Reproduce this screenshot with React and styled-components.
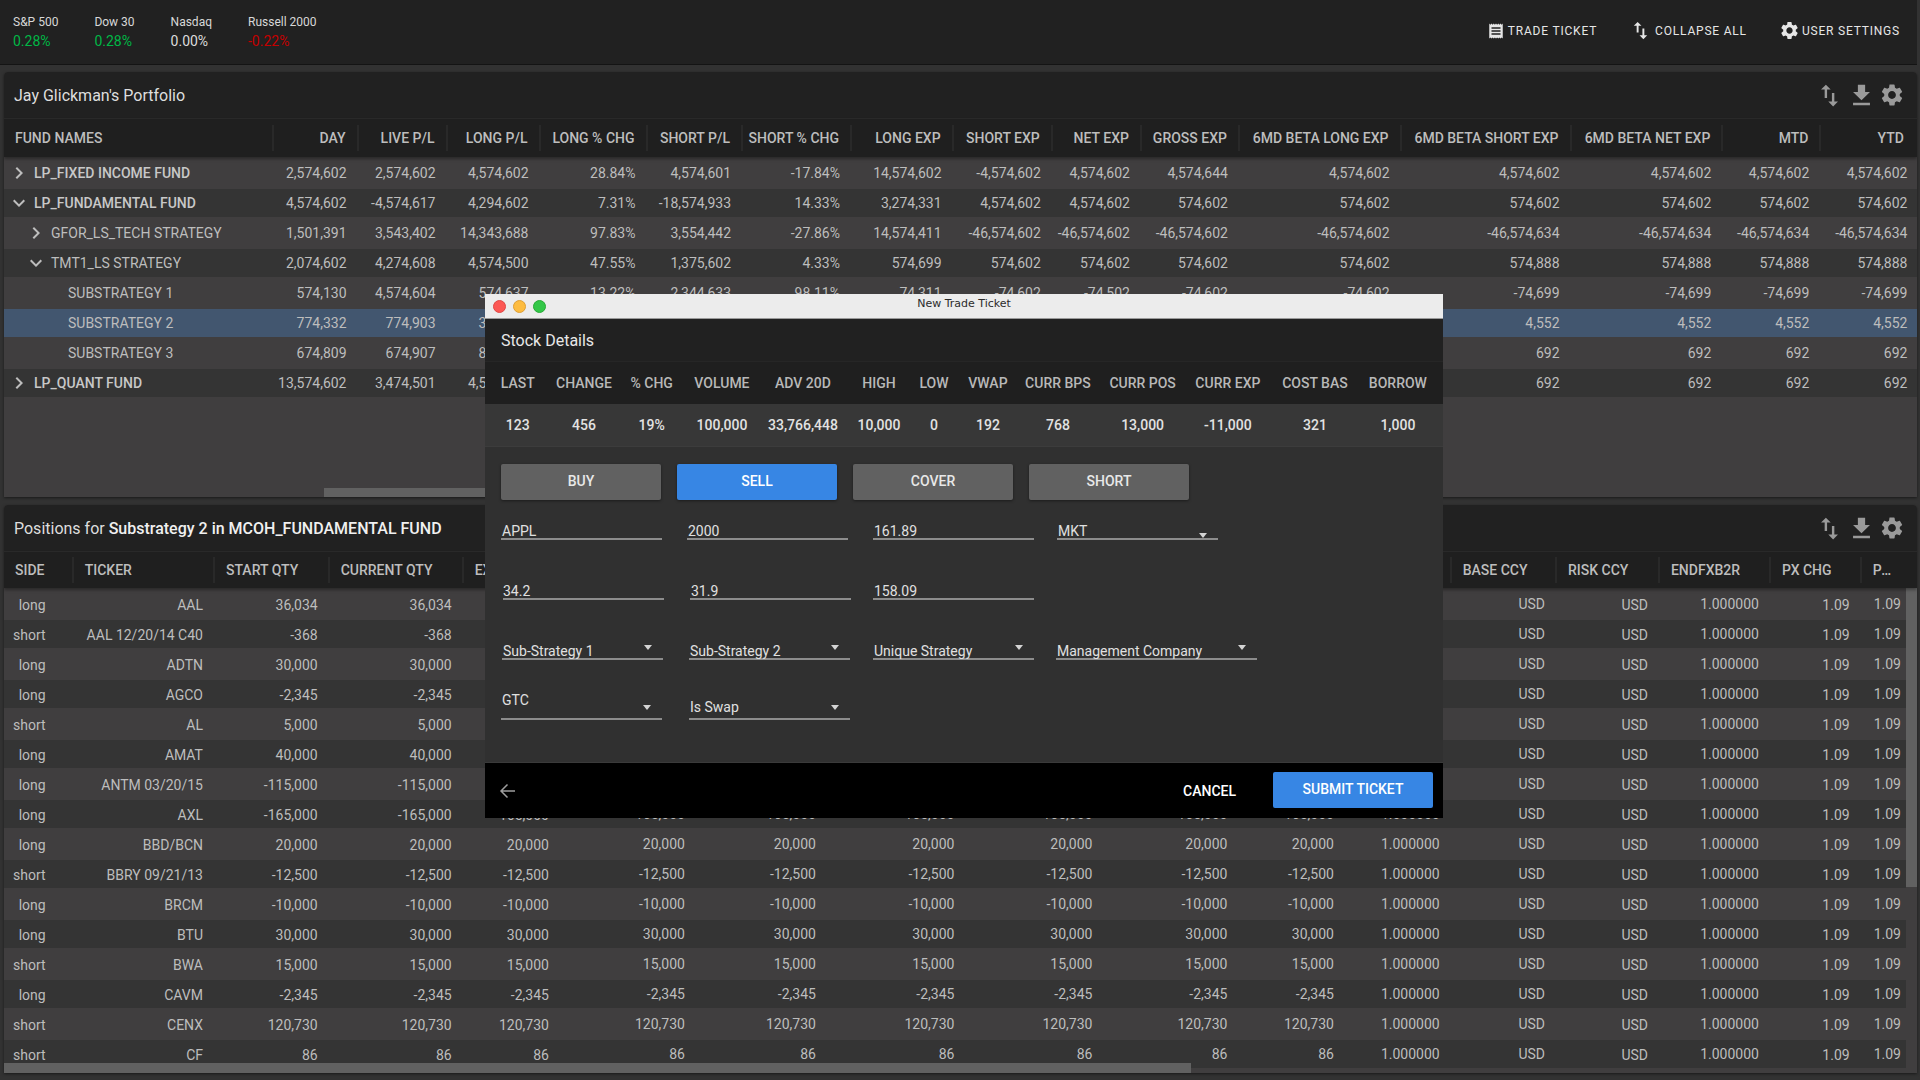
import React from 'react';
import styled, { createGlobalStyle } from 'styled-components';
import { MdReceipt, MdImportExport, MdSettings, MdFileDownload, MdKeyboardArrowRight, MdKeyboardArrowDown } from 'react-icons/md';

const Global = createGlobalStyle`
  html, body { margin: 0; padding: 0; background: #323232; overflow: hidden; }
  * { box-sizing: border-box; }
  body { font-family: Roboto, "Liberation Sans", sans-serif; font-size: 14px; }
`;

const Page = styled.div`
  position: relative;
  width: 1920px;
  height: 1080px;
  overflow: hidden;
  background: #323232;
`;
const TopBar = styled.header`
  width: 1917px;
  height: 65px;
  background: #212121;
  border-bottom: 1px solid #141414;
  display: flex;
  align-items: center;
  justify-content: space-between;
  padding: 0 17px 0 13px;
`;
const Indices = styled.div`
  display: flex;
  gap: 36px;
  margin-top: -1px;
`;
const Index = styled.div`
  display: flex;
  flex-direction: column;
  gap: 1px;
`;
const IndexName = styled.span`
  font-size: 12px;
  line-height: 17px;
  color: #d8d8d8;
`;
const IndexValue = styled.span`
  font-size: 14px;
  line-height: 18px;
  color: ${p => p.$tone === 'up' ? '#00b746' : p.$tone === 'down' ? '#c40000' : '#dcdcdc'};
`;
const Actions = styled.div`
  display: flex;
  align-items: center;
  gap: 32px;
  margin-top: -3px;
`;
const Action = styled.div`
  display: flex;
  align-items: center;
  gap: ${p => p.$gap || 3}px;
  color: #e6e6e6;
  font-size: 12px;
  letter-spacing: 0.8px;
  text-transform: uppercase;
  white-space: nowrap;
`;
const Stack = styled.div`
  display: flex;
  flex-direction: column;
  gap: 8px;
  margin: 7px 3px 0 4px;
`;
const Panel = styled.section`
  height: ${p => p.$h}px;
  display: flex;
  flex-direction: column;
  border-radius: 4px 4px 0 0;
  overflow: hidden;
  background: #403e3f;
  box-shadow: 0 1px 3px rgba(0,0,0,.5);
`;
const PanelHead = styled.div`
  flex: 0 0 47px;
  display: flex;
  align-items: center;
  justify-content: space-between;
  background: #212121;
  padding: 0 12px 0 10px;
  border-bottom: 1px solid #2a2a2a;
  font-size: 16px;
  color: #dedede;
`;
const Strong = styled.b`
  font-weight: 500;
  color: #f0f0f0;
`;
const Tools = styled.div`
  display: flex;
  align-items: center;
  color: #9a9a9a;
  gap: 0;
`;
const Head = styled.div`
  flex: 0 0 ${p => p.$h}px;
  display: grid;
  grid-template-columns: ${p => p.$cols};
  align-items: center;
  background: #1f1f1f;
  position: relative;
  box-shadow: 0 2px 3px rgba(0,0,0,.35);
  z-index: 1;
`;
const HeadCell = styled.div`
  height: 26px;
  line-height: 26px;
  font-weight: 500;
  font-size: 14px;
  color: #bdbdbd;
  white-space: nowrap;
  overflow: hidden;
  text-overflow: ellipsis;
  text-align: ${p => p.$left ? 'left' : 'right'};
  padding: ${p => p.$left ? '0 4px 0 11px' : '0 11px 0 0'};
  border-right: 2px solid ${p => p.$last ? 'transparent' : '#292929'};
`;
const Body = styled.div`
  flex: 1;
  position: relative;
  overflow: hidden;
  min-height: 0;
  background: #403e3f;
`;
const Row = styled.div`
  display: grid;
  grid-template-columns: ${p => p.$cols};
  align-items: center;
  height: ${p => p.$odd ? 32 : 28}px;
  background: ${p => p.$selected ? '#42566f' : p.$odd ? '#403e3f' : '#343434'};
  color: #bdbdbd;
  font-size: 14px;
  margin-right: ${p => p.$gutter || 0}px;
`;
const NameCell = styled.div`
  display: flex;
  align-items: center;
  padding-left: ${p => p.$pad}px;
  font-weight: ${p => p.$bold ? 500 : 400};
  color: ${p => p.$bold ? '#c8c8c8' : '#bdbdbd'};
  white-space: nowrap;
`;
const Cell = styled.div`
  text-align: right;
  white-space: nowrap;
  padding-right: ${p => p.$pad ?? 12}px;
  padding-top: ${p => p.$drop ? 2 : 0}px;
`;
const ChevronSlot = styled.span`
  display: inline-flex;
  width: 24px;
  margin-right: ${p => p.$gap}px;
  justify-content: center;
  color: #bdbdbd;
`;
const HScroll = styled.div`
  position: absolute;
  left: ${p => p.$left}px;
  bottom: 0;
  width: ${p => p.$w}px;
  height: ${p => p.$h}px;
  background: #616161;
`;
const VScroll = styled.div`
  position: absolute;
  right: 0;
  top: 0;
  width: 11px;
  height: 299px;
  background: #616161;
`;

const Modal = styled.div`
  position: absolute;
  left: 485px;
  top: 294px;
  width: 958px;
  height: 510px;
  display: flex;
  flex-direction: column;
  z-index: 5;
`;
const TitleBar = styled.div`
  flex: 0 0 25px;
  position: relative;
  display: flex;
  align-items: center;
  justify-content: center;
  background: #ececec;
  border-bottom: 1px solid #9a9a9a;
  color: #2b2b2b;
  font-family: "DejaVu Sans", sans-serif;
  font-size: 11px;
  padding-bottom: 5px;
`;
const Lights = styled.div`
  position: absolute;
  left: 8px;
  top: 6px;
  display: flex;
  gap: 7px;
`;
const Light = styled.span`
  width: 13px;
  height: 13px;
  border-radius: 50%;
  background: ${p => p.$c};
  border: 1px solid ${p => p.$b};
`;
const ModalHead = styled.div`
  flex: 0 0 43px;
  display: flex;
  align-items: center;
  padding-left: 16px;
  background: #212121;
  border-bottom: 1px solid #262626;
  font-size: 16px;
  color: #e8e8e8;
`;
const StatsRow = styled.div`
  flex: 0 0 ${p => p.$h}px;
  display: grid;
  grid-template-columns: 65.4px 67.2px 68.2px 72.4px 89.6px 62.4px 47.6px 60.4px 79.6px 89.8px 80.8px 93.2px 72.8px;
  align-items: center;
  background: ${p => p.$head ? '#1f1f1f' : '#373737'};
  border-bottom: ${p => p.$head ? 'none' : '1px solid #3c3c3c'};
  color: ${p => p.$head ? '#b8b8b8' : '#e2e2e2'};
  font-weight: 500;
  font-size: 14px;
`;
const StatCell = styled.div`
  text-align: center;
  white-space: nowrap;
`;
const Form = styled.div`
  flex: 1;
  background: #303030;
  padding: 17px 0 0 16px;
  display: flex;
  flex-direction: column;
`;
const Sides = styled.div`
  display: flex;
  gap: 16px;
  margin-bottom: 22px;
`;
const SideButton = styled.div`
  width: 160px;
  height: 36px;
  line-height: 35px;
  text-align: center;
  font-weight: 500;
  font-size: 14px;
  border-radius: 2px;
  color: ${p => p.$on ? '#fff' : '#e8e8e8'};
  background: ${p => p.$on ? '#3786e4' : '#616161'};
  box-shadow: 0 1px 3px rgba(0,0,0,.45);
`;
const FieldRow = styled.div`
  display: flex;
  height: ${p => p.$h}px;
`;
const Field = styled.div`
  width: ${p => p.$w || 161}px;
  height: ${p => p.$h || 38}px;
  margin-left: ${p => p.$ml || 0}px;
  margin-top: ${p => p.$mt || 0}px;
  padding: 0 0 0 ${p => p.$pl ?? 1}px;
  border-bottom: 2px solid #8c8c8c;
  position: relative;
  display: flex;
  align-items: flex-start;
  color: #e0e0e0;
  font-size: 14px;
  line-height: 20px;
  white-space: nowrap;
`;
const FieldText = styled.span`
  margin-top: ${p => p.$top ?? 2}px;
`;
const Caret = styled.span`
  position: absolute;
  right: ${p => p.$right ?? 10}px;
  bottom: ${p => p.$bottom ?? 10}px;
  width: 0;
  height: 0;
  border-left: 4.5px solid transparent;
  border-right: 4.5px solid transparent;
  border-top: 5px solid #d4d4d4;
`;
const Footer = styled.div`
  flex: 0 0 56px;
  background: #000;
  border-top: 1px solid #3a3a3a;
  display: flex;
  align-items: center;
  padding: 0 10px 0 14px;
`;
const Back = styled.svg`
  width: 17px;
  height: 16px;
  color: #9e9e9e;
  margin-right: auto;
`;
const Cancel = styled.span`
  font-weight: 500;
  font-size: 14px;
  color: #fff;
  margin-right: 37px;
`;
const Submit = styled.div`
  width: 160px;
  height: 36px;
  margin-top: -1px;
  line-height: 34px;
  text-align: center;
  font-weight: 500;
  font-size: 14px;
  color: #fff;
  background: #3786e4;
  border-radius: 2px;
`;

const topCols = [270, 84.5, 89, 93, 107, 95.5, 109, 101.6, 99.2, 89.2, 98, 161.6, 170, 151.8, 98, 95.6];
const topTpl = topCols.map(c => c + 'px').join(' ');
const topHead = ['FUND NAMES', 'DAY', 'LIVE P/L', 'LONG P/L', 'LONG % CHG', 'SHORT P/L', 'SHORT % CHG', 'LONG EXP', 'SHORT EXP', 'NET EXP', 'GROSS EXP', '6MD BETA LONG EXP', '6MD BETA SHORT EXP', '6MD BETA NET EXP', 'MTD', 'YTD'];
const fours = v => [v, v, v, v];
const topRows = [
  { name: 'LP_FIXED INCOME FUND', lvl: 0, icon: 'r', v: ['2,574,602', '2,574,602', '4,574,602', '28.84%', '4,574,601', '-17.84%', '14,574,602', '-4,574,602', '4,574,602', '4,574,644', '4,574,602', ...fours('4,574,602')] },
  { name: 'LP_FUNDAMENTAL FUND', lvl: 0, icon: 'd', v: ['4,574,602', '-4,574,617', '4,294,602', '7.31%', '-18,574,933', '14.33%', '3,274,331', '4,574,602', '4,574,602', '574,602', '574,602', ...fours('574,602')] },
  { name: 'GFOR_LS_TECH STRATEGY', lvl: 1, icon: 'r', v: ['1,501,391', '3,543,402', '14,343,688', '97.83%', '3,554,442', '-27.86%', '14,574,411', '-46,574,602', '-46,574,602', '-46,574,602', '-46,574,602', ...fours('-46,574,634')] },
  { name: 'TMT1_LS STRATEGY', lvl: 1, icon: 'd', v: ['2,074,602', '4,274,608', '4,574,500', '47.55%', '1,375,602', '4.33%', '574,699', '574,602', '574,602', '574,602', '574,602', ...fours('574,888')] },
  { name: 'SUBSTRATEGY 1', lvl: 2, v: ['574,130', '4,574,604', '574,637', '13.22%', '2,344,633', '98.11%', '74,311', '-74,602', '-74,502', '-74,602', '-74,602', ...fours('-74,699')] },
  { name: 'SUBSTRATEGY 2', lvl: 2, sel: true, v: ['774,332', '774,903', '374,500', '6.22%', '344,633', '8.11%', '4,311', '-4,602', '-4,502', '-4,602', '-4,602', ...fours('4,552')] },
  { name: 'SUBSTRATEGY 3', lvl: 2, v: ['674,809', '674,907', '874,500', '5.22%', '244,633', '7.11%', '3,311', '692', '692', '692', '692', ...fours('692')] },
  { name: 'LP_QUANT FUND', lvl: 0, icon: 'r', v: ['13,574,602', '3,474,501', '4,574,500', '7.22%', '244,633', '7.11%', '3,311', '692', '692', '692', '692', ...fours('692')] },
];

const botCols = [69.7, 141.3, 114.7, 134, 97.3, 136, 131, 138.5, 138, 135, 106.5, 105.7, 105.3, 103, 111, 90.7, 44.3];
const botTpl = botCols.map(c => c + 'px').join(' ');
const botHead = ['SIDE', 'TICKER', 'START QTY', 'CURRENT QTY', 'EXP QTY', 'LONG QTY', 'SHORT QTY', 'NET QTY', 'GROSS QTY', 'DELTA QTY', 'BETA QTY', 'FX RATE', 'BASE CCY', 'RISK CCY', 'ENDFXB2R', 'PX CHG', 'PX LAST'];
const botRows = [
  ['long', 'AAL', '36,034'], ['short', 'AAL 12/20/14 C40', '-368'], ['long', 'ADTN', '30,000'], ['long', 'AGCO', '-2,345'],
  ['short', 'AL', '5,000'], ['long', 'AMAT', '40,000'], ['long', 'ANTM 03/20/15', '-115,000'], ['long', 'AXL', '-165,000'],
  ['long', 'BBD/BCN', '20,000'], ['short', 'BBRY 09/21/13', '-12,500'], ['long', 'BRCM', '-10,000'], ['long', 'BTU', '30,000'],
  ['short', 'BWA', '15,000'], ['long', 'CAVM', '-2,345'], ['short', 'CENX', '120,730'], ['short', 'CF', '86'],
];
const dropFromLeft = 5;

const stats = [['LAST', '123'], ['CHANGE', '456'], ['% CHG', '19%'], ['VOLUME', '100,000'], ['ADV 20D', '33,766,448'], ['HIGH', '10,000'], ['LOW', '0'], ['VWAP', '192'], ['CURR BPS', '768'], ['CURR POS', '13,000'], ['CURR EXP', '-11,000'], ['COST BAS', '321'], ['BORROW', '1,000']];

function PanelTools() {
  return (
    <Tools>
      <MdImportExport size={29} />
      <MdFileDownload size={29} style={{ marginLeft: 3 }} />
      <MdSettings size={26} style={{ marginLeft: 3 }} />
    </Tools>
  );
}

const pads = [7, 24, 68];
function NameContent({ row }) {
  const Icon = row.icon === 'r' ? MdKeyboardArrowRight : MdKeyboardArrowDown;
  return (
    <NameCell $pad={row.icon ? pads[row.lvl] - 4 : 64} $bold={row.lvl === 0}>
      {row.icon && <ChevronSlot $gap={row.lvl === 0 ? 3 : 3}><Icon size={24} /></ChevronSlot>}
      {row.name}
    </NameCell>
  );
}

export default function App() {
  return (
    <Page>
      <Global />
      <TopBar>
        <Indices>
          <Index><IndexName>S&amp;P 500</IndexName><IndexValue $tone="up">0.28%</IndexValue></Index>
          <Index><IndexName>Dow 30</IndexName><IndexValue $tone="up">0.28%</IndexValue></Index>
          <Index><IndexName>Nasdaq</IndexName><IndexValue>0.00%</IndexValue></Index>
          <Index><IndexName>Russell 2000</IndexName><IndexValue $tone="down">-0.22%</IndexValue></Index>
        </Indices>
        <Actions>
          <Action><MdReceipt size={18} />Trade Ticket</Action>
          <Action><MdImportExport size={23} />Collapse All</Action>
          <Action $gap={2}><MdSettings size={21} />User Settings</Action>
        </Actions>
      </TopBar>
      <Stack>
        <Panel $h={425}>
          <PanelHead><span>Jay Glickman's Portfolio</span><PanelTools /></PanelHead>
          <Head $h={38} $cols={topTpl}>
            {topHead.map((h, i) => <HeadCell key={h} $left={i === 0} $last={i === topHead.length - 1}>{h}</HeadCell>)}
          </Head>
          <Body>
            {topRows.map((r, i) => (
              <Row key={r.name} $cols={topTpl} $odd={i % 2 === 0} $selected={r.sel}>
                <NameContent row={r} />
                {r.v.map((v, j) => <Cell key={j} $pad={j === 14 ? 9.5 : 12}>{v}</Cell>)}
              </Row>
            ))}
            <HScroll $left={320} $w={300} $h={9} />
          </Body>
        </Panel>
        <Panel $h={568}>
          <PanelHead>
            <span>Positions for <Strong>Substrategy 2 in MCOH_FUNDAMENTAL FUND</Strong></span>
            <PanelTools />
          </PanelHead>
          <Head $h={36} $cols={botTpl}>
            {botHead.map((h, i) => <HeadCell key={h} $left $last={i === botHead.length - 1}>{h}</HeadCell>)}
          </Head>
          <Body>
            {botRows.map((r, i) => {
              const vals = [r[0], r[1], ...Array(9).fill(r[2]), '1.000000', 'USD', 'USD', '1.000000', '1.09', '1.09'];
              vals[10] = r[2];
              vals[11] = '1.000000';
              return (
                <Row key={r[1] + i} $cols={botTpl} $odd={i % 2 === 0} $gutter={11}>
                  {vals.map((v, j) => (
                    <Cell key={j} $pad={j === 0 ? 28 : j === 16 ? 5 : 12} $drop={j < dropFromLeft || j === 13 || j === 15}>{v}</Cell>
                  ))}
                </Row>
              );
            })}
            <HScroll $left={0} $w={1187} $h={10} />
            <VScroll />
          </Body>
        </Panel>
      </Stack>
      <Modal>
        <TitleBar>
          <Lights>
            <Light $c="#fc5753" $b="#df4744" />
            <Light $c="#fdbc40" $b="#de9f34" />
            <Light $c="#33c748" $b="#27aa35" />
          </Lights>
          New Trade Ticket
        </TitleBar>
        <ModalHead>Stock Details</ModalHead>
        <StatsRow $head $h={42}>{stats.map(s => <StatCell key={s[0]}>{s[0]}</StatCell>)}</StatsRow>
        <StatsRow $h={43}>{stats.map(s => <StatCell key={s[0]}>{s[1]}</StatCell>)}</StatsRow>
        <Form>
          <Sides>
            <SideButton>BUY</SideButton>
            <SideButton $on>SELL</SideButton>
            <SideButton>COVER</SideButton>
            <SideButton>SHORT</SideButton>
          </Sides>
          <FieldRow $h={60}>
            <Field $h={17 + 0} $mt={0} style={{ height: 18 }}><FieldText $top={-1}>APPL</FieldText></Field>
            <Field $ml={25} $h={18}><FieldText $top={-1}>2000</FieldText></Field>
            <Field $ml={25} $h={18}><FieldText $top={-1}>161.89</FieldText></Field>
            <Field $ml={23} $h={18}><FieldText $top={-1}>MKT</FieldText><Caret $right={11} $bottom={0} /></Field>
          </FieldRow>
          <FieldRow $h={60}>
            <Field $ml={2} $h={18} $pl={0}><FieldText $top={-1}>34.2</FieldText></Field>
            <Field $ml={26} $h={18}><FieldText $top={-1}>31.9</FieldText></Field>
            <Field $ml={22} $h={18}><FieldText $top={-1}>158.09</FieldText></Field>
          </FieldRow>
          <FieldRow $h={60}>
            <Field $ml={1} $h={18}><FieldText $top={-1}>Sub-Strategy 1</FieldText><Caret $right={11} $bottom={8} /></Field>
            <Field $ml={26} $h={18}><FieldText $top={-1}>Sub-Strategy 2</FieldText><Caret $right={11} $bottom={8} /></Field>
            <Field $ml={23} $h={18}><FieldText $top={-1}>Unique Strategy</FieldText><Caret $right={11} $bottom={8} /></Field>
            <Field $ml={22} $w={201} $h={18}><FieldText $top={-1}>Management Company</FieldText><Caret $right={11} $bottom={8} /></Field>
          </FieldRow>
          <FieldRow $h={60}>
            <Field $h={30} style={{ marginTop: -12 }}><FieldText $top={0}>GTC</FieldText><Caret $right={11} $bottom={8} /></Field>
            <Field $ml={27} $h={23} style={{ marginTop: -5 }}><FieldText $top={0}>Is Swap</FieldText><Caret $right={11} $bottom={8} /></Field>
          </FieldRow>
        </Form>
        <Footer>
          <Back viewBox="0 0 17 16" fill="none" stroke="currentColor" strokeWidth="1.5">
            <path d="M16 8H2M8.5 1.5 2 8l6.5 6.5" />
          </Back>
          <Cancel>CANCEL</Cancel>
          <Submit>SUBMIT TICKET</Submit>
        </Footer>
      </Modal>
    </Page>
  );
}
